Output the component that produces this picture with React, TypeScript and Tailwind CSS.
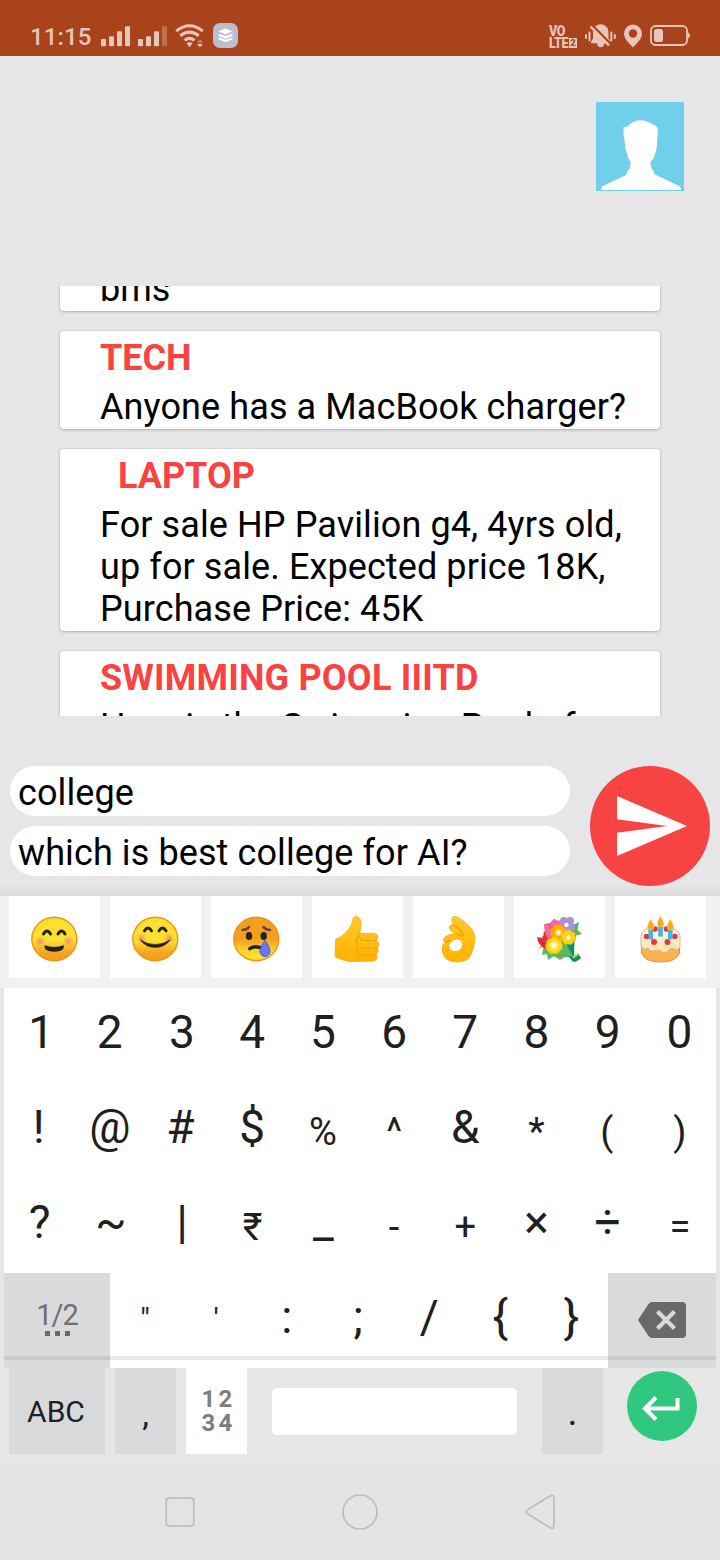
import type { ReactNode } from "react";

function SignalBars({ weak = false }: { weak?: boolean }) {
  return (
    <svg className="h-[21px] w-[30px]" viewBox="0 0 30 21" fill="#e6c6bb">
      <rect x="0" y="13" width="5" height="7.3" rx="1" />
      <rect x="8" y="10.3" width="5" height="10" rx="1" />
      <rect x="16" y="5.3" width="5" height="15" rx="1" />
      <rect x="24" y="0.3" width="5" height="20" rx="1" opacity={weak ? 0.35 : 1} />
    </svg>
  );
}

function StatusBar() {
  return (
    <header className="flex h-[56px] shrink-0 items-start bg-[#a8431b] pt-[22px] pr-[30px] pl-[30px] text-[#e6c6bb]">
      <span className="w-[71px] text-[24px] leading-[30px] font-medium tracking-[0.1px] whitespace-nowrap">11:15</span>
      <div className="flex gap-[7px] pt-[4px]">
        <SignalBars />
        <SignalBars weak />
      </div>
      <svg className="mt-[2px] ml-[7px] h-[24px] w-[30px]" viewBox="0 0 30 24" fill="none" stroke="#e6c6bb" strokeWidth="3">
        <path d="M1.2 7.2Q14.5 -3.8 27.8 7.2" />
        <path d="M5.3 11.8Q14.5 4.5 23.7 11.8" />
        <path d="M9.6 16.4Q14.5 12.4 19.4 16.4" />
        <path d="M11.5 19.300q3-2 6 0l-3 4z" fill="#e6c6bb" stroke="none" />
        <path d="M22 18.7h6l-3-3.4z" fill="#c98164" stroke="none" />
        <path d="M22 20h6l-3 3.2z" fill="#e6c6bb" stroke="none" />
      </svg>
      <svg className="mt-[1px] ml-[8px] h-[25px] w-[25px]" viewBox="0 0 25 25">
        <rect width="25" height="25" rx="7" fill="#b9bfcc" />
        <path d="M12.5 5.500l7 2.800-7 3-7-3z" fill="#fff" />
        <path d="M5.500 10.800l7 2.300 7-2.300v2.200l-7 2.700-7-2.700zM5.500 14.500l7 2.300 7-2.300v1.800l-7 2.900-7-2.900z" fill="#fff" />
      </svg>
      <div className="grow" />
      <div className="mt-[3px] mr-[8px] flex w-[28px] flex-col text-[12.500px] leading-[12px] font-black tracking-[-0.500px]">
        <span className="h-[12px] scale-y-[1.2]">VO</span>
        <span className="flex h-[12px] items-center">
          <span className="w-[20px] shrink-0 scale-y-[1.2]">LTE</span>
          <span className="h-[10px] w-[8px] shrink-0 bg-[#e6c6bb] text-center text-[9.500px] leading-[10px] tracking-normal text-[#a8431b]">
            2
          </span>
        </span>
      </div>
      <svg className="mt-[1px] mr-[8px] h-[26px] w-[31px]" viewBox="0 0 31 26" fill="#e6c6bb">
        <path d="M15.500 1.200c5 0 8 3.600 8 8.300v6l2 3.600v1.200H6v-1.200l2-3.600v-6c0-4.700 2.700-8.300 7.500-8.300z" />
        <path d="M12 20h7.500q-.5 4.200-3.800 4.200T12 20z" />
        <path d="M7 1.700l18.500 19" stroke="#a8431b" strokeWidth="2.200" />
        <path d="M5.500 3.500l18.500 19" stroke="#e6c6bb" strokeWidth="2.400" />
        <rect x="0" y="11" width="2" height="5" rx="1" />
        <rect x="3.500" y="8.500" width="2" height="10" rx="1" />
        <rect x="25.300" y="8.500" width="2" height="10" rx="1" />
        <rect x="28.800" y="11" width="2" height="5" rx="1" />
      </svg>
      <svg className="mt-[2px] mr-[8px] h-[24px] w-[18px]" viewBox="0 0 18 24">
        <path
          fillRule="evenodd"
          d="M9 .5a9 9 0 0 0-9 9C0 15 5 19 9 23.500 13 19 18 15 18 9.500a9 9 0 0 0-9-9zm0 4.800a4.200 4.200 0 1 1 0 8.400 4.200 4.200 0 0 1 0-8.400z"
          fill="#e6c6bb"
        />
      </svg>
      <svg className="mt-[3px] h-[21px] w-[40px]" viewBox="0 0 40 21">
        <rect x="1" y="1" width="36" height="19" rx="4.500" fill="none" stroke="#e6c6bb" strokeWidth="1.800" />
        <rect x="4" y="4" width="9" height="13" rx="2.500" fill="#e6c6bb" />
        <path d="M38 7.500q2 1 2 3t-2 3z" fill="#e6c6bb" />
      </svg>
    </header>
  );
}

function Avatar() {
  return (
    <svg className="h-[89px] w-[88px]" viewBox="0 0 88 89">
      <rect width="88" height="89" fill="#70cfeb" />
      <path
        d="M5 88Q5 85 8 83.500L30 73Q31.500 68 34 66L34.700 60.300Q31.500 56 30.700 50.700Q29 48 29 43L28.800 40Q27 33 27.500 25L31 25Q37 18.300 44 18.300Q51 18.300 60 24Q62.300 26 61.700 32L61 40Q61.500 45 59.500 50.500Q58 57 54.300 60.300L55.300 66Q58 68.500 58.500 72.300L82 83.500Q85 85 85 88z"
        fill="#fff"
      />
    </svg>
  );
}

function PostTitle({ children }: { children: string }) {
  return (
    <h2
      className={
        children.length > 10
          ? "mb-[7px] text-[36px] leading-[42px] font-bold tracking-[0.200px] whitespace-pre text-[#f94343]"
          : "mb-[7px] text-[36px] leading-[42px] font-bold whitespace-pre text-[#f94343]"
      }
    >
      {children}
    </h2>
  );
}

function PostCard({ title, body }: { title: string; body: string[] }) {
  return (
    <article className="shrink-0 rounded-[4px] bg-white px-[40px] pt-[6px] pb-[1px] shadow-[0_1px_3px_rgba(0,0,0,0.2),0_0_2px_rgba(0,0,0,0.16)]">
      <PostTitle>{title}</PostTitle>
      {body.map((line) => (
        <p key={line} className="text-[36px] leading-[42px] tracking-[0.1px] whitespace-nowrap">
          {line}
        </p>
      ))}
    </article>
  );
}

function Feed() {
  return (
    <section className="mx-[50px] mt-[95px] flex h-[430px] shrink-0 flex-col gap-[20px] overflow-hidden px-[10px]">
      <article className="flex h-[25px] shrink-0 flex-col justify-end rounded-b-[4px] bg-white px-[40px] pb-[1px] shadow-[0_1px_3px_rgba(0,0,0,0.2),0_0_2px_rgba(0,0,0,0.16)]">
        <p className="text-[36px] leading-[42px]">bms</p>
      </article>
      <PostCard title="TECH" body={["Anyone has a MacBook charger?"]} />
      <PostCard
        title="  LAPTOP"
        body={["For sale HP Pavilion g4, 4yrs old,", "up for sale. Expected price 18K,", "Purchase Price: 45K"]}
      />
      <PostCard title="SWIMMING POOL IIITD" body={["Here is the Swimming Pool of"]} />
    </section>
  );
}

function Composer() {
  return (
    <section className="flex h-[180px] shrink-0 items-start justify-between bg-[linear-gradient(to_bottom,transparent_168px,#dcdcde_180px)] pt-[50px] pr-[10px] pl-[10px]">
      <div className="flex w-[560px] flex-col gap-[10px] text-[36px] leading-[42px] tracking-[0.1px]">
        <div className="h-[50px] rounded-full bg-white pt-[6px] pl-[8px]">college</div>
        <div className="h-[50px] rounded-full bg-white pt-[6px] pl-[8px]">which is best college for AI?</div>
      </div>
      <button className="flex h-[120px] w-[120px] items-center justify-center rounded-full bg-[#f84343]" aria-label="Send">
        <svg className="ml-[3px] h-[60px] w-[70px]" viewBox="2 3 21 18" fill="#fff">
          <path d="M2.010 21L23 12 2.010 3 2 10l15 2-15 2z" />
        </svg>
      </button>
    </section>
  );
}

function EmojiGradients() {
  return (
    <svg className="absolute h-0 w-0" aria-hidden="true">
      <defs>
        <linearGradient id="face" x1="0" y1="0" x2="0" y2="1">
          <stop offset="0.55" stopColor="#fde030" />
          <stop offset="0.8" stopColor="#f7a523" />
          <stop offset="1" stopColor="#f59c1c" />
        </linearGradient>
        <linearGradient id="sad" x1="0" y1="0" x2="0" y2="1">
          <stop offset="0.5" stopColor="#f59f20" />
          <stop offset="0.85" stopColor="#fde030" />
        </linearGradient>
        <radialGradient id="blush">
          <stop offset="0" stopColor="#f2807c" stopOpacity="0.9" />
          <stop offset="1" stopColor="#f2a05c" stopOpacity="0" />
        </radialGradient>
        <linearGradient id="hand" x1="0" y1="0" x2="0" y2="1">
          <stop offset="0" stopColor="#ffca28" />
          <stop offset="1" stopColor="#ffb300" />
        </linearGradient>
        <linearGradient id="wrap" x1="0" y1="0" x2="1" y2="0">
          <stop offset="0" stopColor="#4caf50" />
          <stop offset="1" stopColor="#00897b" />
        </linearGradient>
        <linearGradient id="icing" x1="0" y1="0" x2="0" y2="1">
          <stop offset="0" stopColor="#fffaf0" />
          <stop offset="1" stopColor="#ffe0a8" />
        </linearGradient>
      </defs>
    </svg>
  );
}

const emojis: { name: string; art: ReactNode }[] = [
  {
    name: "smiling",
    art: (
      <>
        <ellipse cx="23.300" cy="23" rx="22.500" ry="21.700" fill="url(#face)" stroke="#ef9410" strokeWidth="1.400" />
        <circle cx="9" cy="25.500" r="6" fill="url(#blush)" />
        <circle cx="37.500" cy="25.500" r="6" fill="url(#blush)" />
        <path d="M12.500 18q3.500-6 7 0M27 18q3.500-6 7 0" fill="none" stroke="#222" strokeWidth="3" strokeLinecap="round" />
        <path d="M13.500 29.300q9.700 3.300 19.400 0 1 6.500-9.700 6.500t-9.700-6.500z" fill="#222" />
      </>
    ),
  },
  {
    name: "blushing",
    art: (
      <>
        <ellipse cx="23.300" cy="23" rx="22.500" ry="21.700" fill="url(#face)" stroke="#ef9410" strokeWidth="1.400" />
        <circle cx="9.500" cy="22.500" r="6" fill="url(#blush)" />
        <circle cx="37" cy="22.500" r="6" fill="url(#blush)" />
        <path d="M12.500 14.800q3.500-5.500 7 0M27 14.800q3.500-5.500 7 0" fill="none" stroke="#222" strokeWidth="3" strokeLinecap="round" />
        <path d="M8 23.500q15 10 30.500 0-5.500 8-15.200 8T8 23.500z" fill="#222" stroke="#222" strokeWidth=".5" />
      </>
    ),
  },
  {
    name: "crying",
    art: (
      <>
        <ellipse cx="23.300" cy="23" rx="22.500" ry="21.700" fill="url(#sad)" stroke="#ef9410" strokeWidth="1.400" />
        <path d="M9.500 14q4.500-.3 6.500-3M30.500 11q2 2.700 6.500 3" fill="none" stroke="#6d4636" strokeWidth="2.600" strokeLinecap="round" />
        <ellipse cx="16" cy="20" rx="3.200" ry="3.900" fill="#222" />
        <ellipse cx="30.700" cy="20" rx="3.200" ry="3.900" fill="#222" />
        <path d="M15.500 33.500q7-5.500 15 0" fill="none" stroke="#222" strokeWidth="3.200" />
        <path d="M32 24.500q5 7 5 11a5 5 0 0 1-10 0q0-4 5-11z" fill="#6878f8" stroke="#4658db" />
      </>
    ),
  },
  {
    name: "thumbs up",
    art: (
      <>
        <path
          d="M1.500 23.500q7-3 10.500-7Q18.500 9.500 18.500 4q1-3.800 4-3.600 5 1.800 4.500 8-.3 5-1.500 9h14.500q3.800.5 3.800 3.700-.2 2.300-1.200 3.300 2.300 1.300 2.200 4-.2 2.200-1.800 3.300 1.400 1.500 1.100 4-.5 2.100-2 2.800 1.100 1.700.8 4-1 2.600-3.700 2.600L16 45.500Q11 45 3 41.700 1 41.500 1 39z"
          fill="url(#hand)"
          stroke="#f5a80a"
          strokeWidth=".8"
        />
        <path
          d="M24.500 19q-3.500 3.500-2 7.500 2 2.500 1.500 4-2 2.200-.5 5.700-1 2.500.8 5l1.200 3M26 18q-2 3 1.500 6.500H43M25 32h18.500M25 38.800h17M6 37.500v4.500"
          fill="none"
          stroke="#f0a00a"
          strokeWidth="1"
        />
      </>
    ),
  },
  {
    name: "ok hand",
    art: (
      <>
        <path
          fillRule="evenodd"
          d="M15 1q-4.300-2-5.200 2.500.2 3.500 2 5.800-3.700-1.500-4.400 2Q7.500 15 14 18.500 5 17.500 1.500 23 .5 25 3.500 26 0 28 .2 34q1 12 15.500 12 10 0 13-7 4-8 4.300-18Q31.500 10.500 15 1zM8.500 26.500q4-5 9-3 3.500 1.500 3 6-1 5.500-7 6-6 0-7-5.500.5-2 2-3.500z"
          transform="translate(7 0)"
          fill="url(#hand)"
          stroke="#f5a80a"
          strokeWidth=".8"
        />
        <path d="M19 9.500q9 4.500 9 10.500M21 18q4 0 6 2.500M10 26q3.500-.5 5-2" fill="none" stroke="#e89b05" strokeWidth="1.200" />
      </>
    ),
  },
  {
    name: "bouquet",
    art: (
      <>
        <path d="M39 13l-1 26 4 4-5 3-4-5-20-1-7-20z" fill="url(#wrap)" />
        <path d="M1 34l7-4.500L6 39l5-1 1 6 6-4 6 4 5-3 8-1-9-16L8 27z" fill="#5cb85c" />
        <path d="M35 10l8-4-1.500 8 4.500 4-6 1.500v4l-8-5z" fill="#59b75b" />
        <path d="M1 21l6 1 1-7 6 5 2 12-7 1q-7-4-8-12z" fill="#e2333b" />
        <path d="M2 24q5 1 9 9" fill="none" stroke="#a91d28" />
        <path d="M8 8l6-1 4-4.500 3 2 4 0-2 14-11 4q-4-6-4-14.500z" fill="#f06a9b" />
        <path d="M12 8q5 3 4 12" fill="none" stroke="#d84882" />
        <g fill="#aa91d2">
          <circle cx="28" cy="5" r="4" />
          <circle cx="34" cy="5" r="4" />
          <circle cx="26.500" cy="10.500" r="4" />
          <circle cx="35" cy="11" r="4" />
          <circle cx="31" cy="14" r="4" />
        </g>
        <circle cx="30.500" cy="9" r="2.200" fill="#fff" />
        <circle cx="22.500" cy="16.500" r="7.500" fill="#ffa900" stroke="#ffa900" strokeWidth="1.500" strokeDasharray="4 2" />
        <circle cx="22.500" cy="16.500" r="3.800" fill="#ffcb3c" />
        <circle cx="22.500" cy="16.500" r="2" fill="#fff" />
        <circle cx="32.500" cy="21.500" r="6.800" fill="#ffd51b" stroke="#fbc618" strokeWidth="1.500" strokeDasharray="4 2" />
        <circle cx="32.500" cy="21.500" r="2.200" fill="#fff9cf" />
        <circle cx="18" cy="29.500" r="8" fill="#ffd51b" stroke="#fbc618" strokeWidth="1.500" strokeDasharray="5 2" />
        <circle cx="18" cy="29.500" r="4.500" fill="#ffe95e" />
        <circle cx="18" cy="29.500" r="2.400" fill="#fffef0" />
        <path d="M37 42l6-4" stroke="#b9e52c" strokeWidth="3" />
        <path d="M38 44.500l6-4" stroke="#16877b" strokeWidth="4" />
      </>
    ),
  },
  {
    name: "birthday cake",
    art: (
      <>
        <path d="M4.500 28v9q3 9 19 9t19-9v-9z" fill="#f9b44f" stroke="#d99545" />
        <path
          d="M4 20Q4.500 11 23.500 11T43 20v11q-3 4.500-6 2-2-2-5 1-4 5-8 1-4-2-7 0-4 1-6-3-5 3-7-2z"
          fill="url(#icing)"
          stroke="#d9b587"
        />
        <g fill="#e53a3d">
          <circle cx="18" cy="13" r="2.800" />
          <circle cx="29.500" cy="13" r="2.800" />
          <circle cx="9.500" cy="20.500" r="2.800" />
          <circle cx="37.800" cy="20.500" r="2.800" />
          <circle cx="17" cy="26" r="3" />
          <circle cx="30.500" cy="26" r="3" />
        </g>
        <path d="M13.700 13v10.500M23.500 11v9.500M33.300 13v10.500" stroke="#42b4e6" strokeWidth="4.600" />
        <path
          d="M13.700 3.500q-6 10 0 10.500 6-.5 0-10.500zM23.500.5q-6 10 0 10.500 6-.5 0-10.500zM33.300 3.500q-6 10 0 10.500 6-.5 0-10.500z"
          fill="#fba51c"
          stroke="#fbc33f"
        />
      </>
    ),
  },
];

function EmojiRow() {
  return (
    <div className="flex h-[92px] shrink-0 gap-[10px] bg-[#f1f1f1] pl-[9px]">
      {emojis.map((emoji) => (
        <div key={emoji.name} className="flex h-[82px] w-[91px] items-center justify-center bg-white pt-[4px]">
          <svg className="h-[47px] w-[47px]" viewBox="0 0 47 47" role="img" aria-label={emoji.name}>
            {emoji.art}
          </svg>
        </div>
      ))}
    </div>
  );
}

function keyClass(label: string) {
  if (label === "1") return "flex items-center justify-center pb-[8px] pl-[3px] text-[46px] leading-[54px]";
  if ("\"'".includes(label)) return "flex items-center justify-center pr-[1px] pb-[4px] text-[30px] leading-[36px]";
  if (label === "(") return "flex items-center justify-center pt-[2px] pr-[5px] text-[38px] leading-[44px]";
  if (")₹=".includes(label)) return "flex items-center justify-center pt-[2px] pr-[1px] text-[38px] leading-[44px]";
  if ("%^*-+".includes(label)) return "flex items-center justify-center pt-[2px] pr-[3px] text-[38px] leading-[44px]";
  if ("?~|3".includes(label)) return "flex items-center justify-center pb-[8px] text-[46px] leading-[54px]";
  if ("024!@$_:;/{}".includes(label))
    return "flex items-center justify-center pr-[2px] pb-[8px] text-[46px] leading-[54px]";
  return "flex items-center justify-center pr-[3px] pb-[8px] text-[46px] leading-[54px]";
}

function Key({ label }: { label: string }) {
  return <div className={keyClass(label)}>{label}</div>;
}

function KeyRow({ keys }: { keys: string[] }) {
  return (
    <div className="grid h-[95px] grid-cols-10 bg-white">
      {keys.map((k) => (
        <Key key={k} label={k} />
      ))}
    </div>
  );
}

function Keyboard() {
  return (
    <section className="shrink-0 bg-[#e6e6e6] text-[#202020]">
      <div className="px-[4px]">
        <KeyRow keys={["1", "2", "3", "4", "5", "6", "7", "8", "9", "0"]} />
        <KeyRow keys={["!", "@", "#", "$", "%", "^", "&", "*", "(", ")"]} />
        <KeyRow keys={["?", "~", "|", "₹", "_", "-", "+", "×", "÷", "="]} />
        <div className="relative flex h-[95px] bg-white">
          <div className="flex w-[106px] flex-col items-center bg-[#d9dadc] pt-[25px] text-[#6e6f6f]">
            <span className="text-[29px] leading-[35px] tracking-[-1px]">1/2</span>
            <div className="-mt-[2px] flex gap-[5px]">
              <span className="h-[5px] w-[5px] bg-[#686969]" />
              <span className="h-[5px] w-[5px] bg-[#686969]" />
              <span className="h-[5px] w-[5px] bg-[#686969]" />
            </div>
          </div>
          <div className="grid flex-1 grid-cols-7">
            {['"', "'", ":", ";", "/", "{", "}"].map((k) => (
              <Key key={k} label={k} />
            ))}
          </div>
          <div className="flex w-[108px] items-center justify-center bg-[#d9dadc] pb-[1px]">
            <svg className="h-[36px] w-[48px]" viewBox="0 0 48 36">
              <path d="M0 18L10.500 2Q12 0 14.500 0H44q4 0 4 4v28q0 4-4 4H14.500Q12 36 10.500 34z" fill="#686a69" />
              <path d="M19.500 9.500l17 17M36.500 9.500l-17 17" stroke="#d9dadc" strokeWidth="4.200" />
            </svg>
          </div>
          <div className="absolute inset-x-0 top-[83px] h-[4px] bg-[#283030]/10" />
        </div>
      </div>
      <div className="flex h-[96px] pl-[9px]">
        <div className="h-[86px] w-[96px] bg-[#d9dadc] pt-[26px] pr-[2px] text-center text-[30px] leading-[35px]">ABC</div>
        <div className="ml-[10px] h-[86px] w-[61px] bg-[#d9dadc] pt-[24px] text-center text-[34px] leading-[44px]">,</div>
        <div className="ml-[10px] flex h-[86px] w-[61px] flex-col items-center bg-white pt-[19px] pl-[4px] text-[24px] leading-[24px] font-bold tracking-[3.300px] text-[#7d7d7d]">
          <span>12</span>
          <span>34</span>
        </div>
        <div className="mt-[20px] ml-[25px] h-[47px] w-[245px] rounded-[5px] bg-white" />
        <div className="ml-[25px] h-[86px] w-[61px] bg-[#d9dadc] pt-[22px] text-center text-[38px] leading-[44px]">.</div>
        <div className="mt-[3px] ml-[24px] flex h-[70px] w-[70px] items-center justify-center rounded-full bg-[#30c77f] pr-[3px]">
          <svg className="mt-[4px] h-[26px] w-[40px]" viewBox="0 0 40 26" fill="none" stroke="#fff" strokeWidth="4">
            <path d="M36.500 3v10.500H4M15 2.500L4 13.500l11 11" />
          </svg>
        </div>
      </div>
    </section>
  );
}

function NavBar() {
  return (
    <nav className="flex h-[96px] shrink-0 items-center justify-center gap-[144px] bg-[#e4e4e4]">
      <svg className="h-[36px] w-[36px]" viewBox="0 0 36 36" fill="none" stroke="#bdbdbd" strokeWidth="1.700">
        <rect x="4.200" y="4.200" width="27.600" height="27.600" rx="2.800" />
      </svg>
      <svg className="h-[36px] w-[36px]" viewBox="0 0 36 36" fill="none" stroke="#bdbdbd" strokeWidth="1.700">
        <circle cx="18" cy="18" r="17" />
      </svg>
      <svg className="h-[36px] w-[36px]" viewBox="0 0 36 36" fill="none" stroke="#bdbdbd" strokeWidth="1.700">
        <path d="M5 16L27.500 2.200Q32 0 32 4v27.500Q32 35.500 27.500 33.300L5 19.500Q3 17.700 5 16z" />
      </svg>
    </nav>
  );
}

export default function App() {
  return (
    <main className="flex h-[1560px] w-[720px] flex-col overflow-hidden bg-[#e6e6e8] font-[Roboto,'Liberation_Sans',sans-serif] text-black">
      <EmojiGradients />
      <StatusBar />
      <div className="flex shrink-0 justify-end pt-[46px] pr-[36px]">
        <Avatar />
      </div>
      <Feed />
      <Composer />
      <EmojiRow />
      <Keyboard />
      <NavBar />
    </main>
  );
}
